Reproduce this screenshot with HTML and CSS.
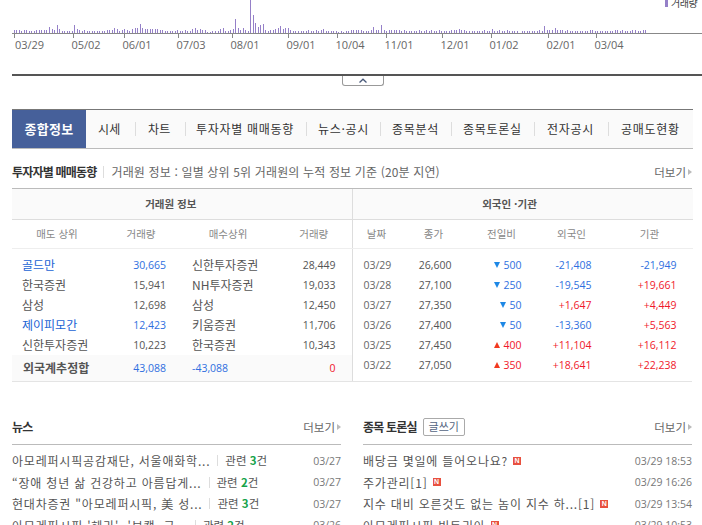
FILE: index.html
```html
<!DOCTYPE html>
<html lang="ko">

<head>
    <meta charset="UTF-8">
    <title>종합정보</title>
    <link rel="stylesheet" href="styles.css">
</head>

<body>
    <svg class="chart" width="702" height="52" viewBox="0 0 702 52">
        <path class="chart-bars" transform="translate(14.3 0) scale(2.515 1)" d="M-1 33m1-3v3m1-3v3m1-3v3m1-2v2m1-3v3m1-3v3m1-2v2m1-2v2m1-2v2m1-3v3
            m1-3v3m1-3v3m1-3v3m1-3v3m1-6v6m1-4v4m1-3v3m1-8v8m1-4v4m1-2v2
            m1-2v2m1-2v2m1-2v2m1-2v2m1-8v8m1-4v4m1-3v3m1-2v2m1-3v3m1-2v2
            m1-2v2m1-2v2m1-2v2m1-2v2m1-2v2m1-2v2m1-2v2m1-3v3m1-3v3m1-3v3
            m1-5v5m1-4v4m1-2v2m1-3v3m1-4v4m1-3v3m1-2v2m1-4v4m1-5v5m1-5v5
            m1-9v9m1-5v5m1-4v4m1-4v4m1-4v4m1-4v4m1-4v4m1-4v4m1-3v3m1-3v3
            m1-2v2m1-2v2m1-2v2m1-2v2m1-2v2m1-3v3m1-2v2m1-2v2m1-3v3m1-2v2
            m1-2v2m1-4v4m1-5v5m1-3v3m1-4v4m1-3v3m1-3v3m1-1v1m1-1v1m1-2v2
            m1-2v2m1-2v2m1-4v4m1-5v5m1-2v2m1-2v2m1-3v3m1-4v4m1-14v14m1-5v5
            m1-3v3m1-5v5m1-3v3m1-2v2m1-33v33m1-18v18m1-10v10m1-6v6m1-8v8m1-9v9
            m1-3v3m1-2v2m1-3v3m1-3v3m1-4v4m1-5v5m1-7v7m1-4v4m1-5v5m1-5v5
            m1-3v3m1-2v2m1-2v2m1-2v2m1-2v2m1-2v2m1-2v2m1-3v3m1-2v2m1-2v2
            m1-3v3m1-2v2m1-3v3m1-4v4m1-2v2m1-2v2m1-2v2m1-2v2m1-2v2m1-1v1
            m1-2v2m1-1v1m1-2v2m1-2v2m1-3v3m1-3v3m1-3v3m1-3v3m1-3v3m1-2v2
            m1-2v2m1-2v2m1-3v3m1-6v6m1-3v3m1-3v3m1-8v8m1-3v3m1-2v2m1-3v3
            m1-3v3m1-3v3m1-3v3m1-3v3m1-2v2m1-3v3m1-2v2m1-2v2m1-2v2m1-2v2
            m1-2v2m1-3v3m1-2v2m1-2v2m1-3v3m1-2v2m1-3v3m1-2v2m1-2v2m1-3v3
            m1-2v2m1-2v2m1-2v2m1-2v2m1-3v3m1-3v3m1-3v3m1-4v4m1-3v3m1-3v3
            m1-2v2m1-2v2m1-2v2m1-2v2m1-2v2m1-2v2m1-2v2m1-3v3m1-2v2m1-2v2
            m1-4v4m1-2v2m1-2v2m1-3v3m1-2v2m1-2v2m1-3v3m1-2v2m1-2v2m1-2v2
            m1-2v2m2-2v2m1-2v2m1-2v2m1-2v2m1-2v2m1-2v2m1-2v2m1-3v3
            m1-2v2m1-7v7m1-3v3m1-3v3m1-3v3m1-5v5m1-3v3m1-3v3m1-3v3m1-2v2
            m1-3v3m1-2v2m1-2v2m1-2v2m1-2v2m1-2v2m1-2v2m1-2v2m1-2v2m1-3v3
            m1-3v3m1-2v2m1-2v2m1-2v2m1-2v2m1-2v2m1-2v2m1-2v2m1-2v2m1-3v3
            m1-3v3m1-2v2m1-3v3m1-2v2m1-2v2m1-2v2m1-3v3m1-3v3m1-2v2m1-2v2
            m1-3v3m1-3v3" />
        <line class="chart-axis" x1="12" y1="33.5" x2="702" y2="33.5" />
        <path class="chart-ticks" d="M14.5 33v5M73.5 33v5M124.5 33v5M178.5 33v5M232.5 33v5M288.5 33v5M337.5 33v5M386.5 33v5M442.5 33v5M491.5 33v5M548.5 33v5M596.5 33v5" />
        <g class="chart-labels">
            <text x="29.5" y="49">03/29</text>
            <text x="86" y="49">05/02</text>
            <text x="137" y="49">06/01</text>
            <text x="191" y="49">07/03</text>
            <text x="245" y="49">08/01</text>
            <text x="301" y="49">09/01</text>
            <text x="350" y="49">10/04</text>
            <text x="399" y="49">11/01</text>
            <text x="455" y="49">12/01</text>
            <text x="504" y="49">01/02</text>
            <text x="561" y="49">02/01</text>
            <text x="609" y="49">03/04</text>
        </g>
        <rect class="chart-key" x="665" y="0" width="3" height="7" />
        <text class="chart-key-label" x="671" y="7">거래량</text>
    </svg>

    <div class="chart-fold">
        <button class="fold-btn" type="button">
            <svg width="8" height="5" viewBox="0 0 8 5">
                <path d="M.5 4.5 4 1.2l3.5 3.3" fill="none" stroke="#4a5a7a" stroke-width="1.3" />
            </svg>
        </button>
    </div>

    <div class="tabs">
        <a class="tab tab-active">종합정보</a>
        <a class="tab tab-sise">시세</a>
        <a class="tab tab-chart">차트</a>
        <a class="tab tab-investor">투자자별 매매동향</a>
        <a class="tab tab-news">뉴스·공시</a>
        <a class="tab tab-analysis">종목분석</a>
        <a class="tab tab-forum">종목토론실</a>
        <a class="tab tab-dart">전자공시</a>
        <a class="tab tab-short">공매도현황</a>
    </div>

    <div class="section-head trade-head">
        <strong class="section-title">투자자별 매매동향</strong>
        <span class="section-note">거래원 정보 : 일별 상위 5위 거래원의 누적 정보 기준 (20분 지연)</span>
        <a class="more">더보기</a>
    </div>

    <div class="trade">
        <table class="trade-table broker">
            <colgroup>
                <col class="b1">
                <col class="b2">
                <col class="b3">
                <col class="b4">
            </colgroup>
            <thead>
                <tr>
                    <th colspan="4" class="group group-broker">거래원 정보</th>
                </tr>
                <tr>
                    <th>매도 상위</th>
                    <th>거래량</th>
                    <th>매수상위</th>
                    <th>거래량</th>
                </tr>
            </thead>
            <tbody>
                <tr>
                    <td class="name link">골드만</td>
                    <td class="num up-blue">30,665</td>
                    <td class="name">신한투자증권</td>
                    <td class="num">28,449</td>
                </tr>
                <tr>
                    <td class="name">한국증권</td>
                    <td class="num">15,941</td>
                    <td class="name">NH투자증권</td>
                    <td class="num">19,033</td>
                </tr>
                <tr>
                    <td class="name">삼성</td>
                    <td class="num">12,698</td>
                    <td class="name">삼성</td>
                    <td class="num">12,450</td>
                </tr>
                <tr>
                    <td class="name link">제이피모간</td>
                    <td class="num up-blue">12,423</td>
                    <td class="name">키움증권</td>
                    <td class="num">11,706</td>
                </tr>
                <tr>
                    <td class="name">신한투자증권</td>
                    <td class="num">10,223</td>
                    <td class="name">한국증권</td>
                    <td class="num">10,343</td>
                </tr>
                <tr class="total">
                    <td class="name total-label">외국계추정합</td>
                    <td class="num up-blue">43,088</td>
                    <td class="name total-diff up-blue">-43,088</td>
                    <td class="num red">0</td>
                </tr>
            </tbody>
        </table>

        <table class="trade-table foreign">
            <colgroup>
                <col class="f1">
                <col class="f2">
                <col class="f3">
                <col class="f4">
                <col class="f5">
            </colgroup>
            <thead>
                <tr>
                    <th colspan="5" class="group group-foreign">외국인 ·기관</th>
                </tr>
                <tr>
                    <th>날짜</th>
                    <th>종가</th>
                    <th>전일비</th>
                    <th>외국인</th>
                    <th>기관</th>
                </tr>
            </thead>
            <tbody>
                <tr>
                    <td class="date">03/29</td>
                    <td class="num">26,600</td>
                    <td class="num up-blue"><i class="tri tri-down"></i>500</td>
                    <td class="num up-blue">-21,408</td>
                    <td class="num up-blue">-21,949</td>
                </tr>
                <tr>
                    <td class="date">03/28</td>
                    <td class="num">27,100</td>
                    <td class="num up-blue"><i class="tri tri-down"></i>250</td>
                    <td class="num up-blue">-19,545</td>
                    <td class="num red">+19,661</td>
                </tr>
                <tr>
                    <td class="date">03/27</td>
                    <td class="num">27,350</td>
                    <td class="num up-blue"><i class="tri tri-down"></i>50</td>
                    <td class="num red">+1,647</td>
                    <td class="num red">+4,449</td>
                </tr>
                <tr>
                    <td class="date">03/26</td>
                    <td class="num">27,400</td>
                    <td class="num up-blue"><i class="tri tri-down"></i>50</td>
                    <td class="num up-blue">-13,360</td>
                    <td class="num red">+5,563</td>
                </tr>
                <tr>
                    <td class="date">03/25</td>
                    <td class="num">27,450</td>
                    <td class="num red"><i class="tri tri-up"></i>400</td>
                    <td class="num red">+11,104</td>
                    <td class="num red">+16,112</td>
                </tr>
                <tr>
                    <td class="date">03/22</td>
                    <td class="num">27,050</td>
                    <td class="num red"><i class="tri tri-up"></i>350</td>
                    <td class="num red">+18,641</td>
                    <td class="num red">+22,238</td>
                </tr>
            </tbody>
        </table>
    </div>

    <div class="lower">
        <section class="board news">
            <div class="section-head board-head">
                <strong class="section-title">뉴스</strong>
                <a class="more">더보기</a>
            </div>
            <ul class="board-list">
                <li>
                    <span class="subject">아모레퍼시픽공감재단, 서울애화학...</span>
                    <span class="related">관련 <b>3</b>건</span>
                    <span class="when">03/27</span>
                </li>
                <li>
                    <span class="subject">“장애 청년 삶 건강하고 아름답게...</span>
                    <span class="related">관련 <b>2</b>건</span>
                    <span class="when">03/27</span>
                </li>
                <li>
                    <span class="subject">현대차증권 "아모레퍼시픽, 美 성...</span>
                    <span class="related">관련 <b>3</b>건</span>
                    <span class="when">03/27</span>
                </li>
                <li>
                    <span class="subject">아모레퍼시픽 '헤라', '보캠, 글...</span>
                    <span class="related">관련 <b>2</b>건</span>
                    <span class="when">03/26</span>
                </li>
            </ul>
        </section>

        <section class="board forum">
            <div class="section-head board-head">
                <strong class="section-title">종목 토론실</strong>
                <a class="write-btn">글쓰기</a>
                <a class="more">더보기</a>
            </div>
            <ul class="board-list">
                <li>
                    <span class="subject">배당금 몇일에 들어오나요?</span>
                    <i class="new-mark">N</i>
                    <span class="when">03/29 18:53</span>
                </li>
                <li>
                    <span class="subject">주가관리[1]</span>
                    <i class="new-mark">N</i>
                    <span class="when">03/29 16:26</span>
                </li>
                <li>
                    <span class="subject">지수 대비 오른것도 없는 놈이 지수 하...[1]</span>
                    <i class="new-mark">N</i>
                    <span class="when">03/29 13:54</span>
                </li>
                <li>
                    <span class="subject">아모레퍼시픽 빅토리아</span>
                    <i class="new-mark">N</i>
                    <span class="when">03/29 10:53</span>
                </li>
            </ul>
        </section>
    </div>
</body>

</html>
```

FILE: styles.css
```css
:root {
    --text-color: #555;
    --dark-text: #333;
    --muted-text: #888;
    --blue: #2f6fe0;
    --link-blue: #1a63d4;
    --red: #f0182c;
    --tab-blue: #46609a;
    --band: #fafafa;
    --line: #ddd;
    --strong-line: #bbb;
    --ko-font: "Noto Sans CJK KR", "Noto Sans", sans-serif;
    --num-font: "Open Sans", "Liberation Sans", sans-serif;
}

* {
    box-sizing: border-box;
    margin: 0;
    padding: 0;
}

html,
body {
    height: 525px;
    overflow: hidden;
}

body {
    width: 702px;
    padding-left: 12px;
    font-family: var(--ko-font);
    font-size: 12px;
    color: var(--text-color);
    background: #fff;
}

/* chart */
.chart {
    display: block;
    margin-left: -12px;
}

.chart-bars {
    fill: none;
    stroke: #9580c8;
    stroke-width: 1px;
    vector-effect: non-scaling-stroke;
    shape-rendering: crispEdges;
}

.chart-axis,
.chart-ticks {
    fill: none;
    stroke: #888;
    stroke-width: 1;
    shape-rendering: crispEdges;
}

.chart-labels text {
    font-family: var(--num-font);
    font-size: 11px;
    fill: #666;
    text-anchor: middle;
}

.chart-key {
    fill: #9580c8;
}

.chart-key-label {
    font-size: 10px;
    letter-spacing: -0.5px;
    fill: #444;
}

.chart-fold {
    display: flex;
    width: 690px;
    height: 35px;
    margin-top: 22px;
    padding-left: 330px;
    border-top: 2px solid #555;
}

.fold-btn {
    width: 42px;
    height: 10px;
    display: flex;
    justify-content: center;
    align-items: center;
    background: #fff;
    border: 1px solid #999;
    border-top: none;
    border-radius: 0 0 3px 3px;
}

/* tabs */
.tabs {
    display: flex;
    align-items: center;
    width: 681px;
    height: 40px;
    background: var(--band);
    border-top: 1px solid #777;
    border-bottom: 1px solid var(--strong-line);
}

.tab {
    display: block;
    font-size: 12px;
    color: var(--dark-text);
    letter-spacing: 0.7px;
    white-space: nowrap;
    border-right: 1px solid var(--line);
    line-height: 14px;
}

.tab-active {
    width: 74px;
    height: 38px;
    line-height: 38px;
    text-align: center;
    font-size: 13px;
    font-weight: 700;
    letter-spacing: 0.3px;
    color: #fff;
    background: var(--tab-blue);
    border-right: none;
}

.tab-sise { width: 50px; padding-left: 12px; letter-spacing: 0.3px; }
.tab-chart { width: 50px; padding-left: 12px; letter-spacing: 0.3px; }
.tab-investor { width: 121px; padding-left: 10px; }
.tab-news { width: 74px; padding-left: 11px; }
.tab-analysis { width: 71px; padding-left: 11px; }
.tab-forum { width: 83px; padding-left: 11px; }
.tab-dart { width: 74px; padding-left: 12px; }
.tab-short { padding-left: 12px; border-right: none; }

/* section heads */
.section-head {
    display: flex;
    align-items: center;
    width: 680px;
}

.trade-head {
    height: 39px;
    padding-top: 6px;
}

.section-title {
    font-size: 12px;
    font-weight: 700;
    color: var(--dark-text);
    letter-spacing: -0.8px;
}

.section-note {
    margin-left: 7px;
    padding-left: 7px;
    border-left: 1px solid var(--line);
    line-height: 12px;
    letter-spacing: 0.15px;
    color: #666;
}

.more {
    margin-left: auto;
    padding-right: 6px;
    font-size: 11.5px;
    color: #666;
    position: relative;
}

.more::after {
    content: "";
    position: absolute;
    right: 0;
    top: 50%;
    margin-top: -3px;
    border-left: 4px solid #bbb;
    border-top: 3px solid transparent;
    border-bottom: 3px solid transparent;
}

/* trade tables */
.trade {
    display: flex;
    width: 680px;
    border-top: 1px solid var(--strong-line);
    border-bottom: 1px solid #e4e4e4;
}

.trade-table {
    border-collapse: collapse;
    table-layout: fixed;
}

.broker {
    width: 340px;
    border-right: 1px solid var(--line);
}

.foreign {
    width: 340px;
}

.b1 { width: 90px; }
.b2 { width: 78px; }
.b3 { width: 96px; }
.b4 { width: 76px; }
.f1 { width: 48px; }
.f2 { width: 66px; }
.f3 { width: 70px; }
.f4 { width: 70px; }
.f5 { width: 86px; }

.trade-table th {
    height: 29px;
    font-size: 10.5px;
    font-weight: 400;
    color: #888;
    text-align: center;
    border-bottom: 1px solid #eee;
}

.trade-table .group {
    height: 30px;
    font-weight: 700;
    color: #555;
    background: var(--band);
    border-bottom: 1px solid var(--line);
}

.trade-table .group-broker {
    padding-right: 22px;
}

.trade-table .group-foreign {
    padding-right: 26px;
}

.trade-table td {
    height: 20px;
    line-height: 18px;
    white-space: nowrap;
}

.trade-table tbody tr:first-child td {
    height: 27px;
    padding-top: 7px;
}

.trade-table .name {
    padding-left: 10px;
}

.broker td:nth-child(3) {
    padding-left: 12px;
}

.trade-table .num {
    font-family: var(--num-font);
    font-size: 10.5px;
    text-align: right;
    padding-right: 15px;
}

.broker td:nth-child(2) {
    padding-right: 14px;
}

.broker td:nth-child(4) {
    padding-right: 16px;
}

.foreign td:nth-child(5) {
    padding-right: 16px;
}

.foreign tbody tr:last-child td {
    height: 26px;
    padding-bottom: 6px;
}

.trade-table .date {
    padding-left: 11px;
    font-family: var(--num-font);
    font-size: 10.5px;
    color: #666;
}

.trade-table .link {
    color: var(--link-blue);
}

.trade-table .up-blue {
    color: var(--blue);
}

.trade-table .red {
    color: var(--red);
}

.trade-table .total td {
    height: 26px;
    background: var(--band);
}

.trade-table .total-label {
    padding-left: 11px;
    font-weight: 700;
    color: #555;
}

.trade-table .total-diff {
    font-family: var(--num-font);
    font-size: 10.5px;
}

.tri {
    display: inline-block;
    width: 0;
    height: 0;
    margin-right: 3px;
    vertical-align: 1px;
    border-left: 3.5px solid transparent;
    border-right: 3.5px solid transparent;
}

.tri-down {
    border-top: 6px solid #1e88e5;
}

.tri-up {
    border-bottom: 6px solid #f2391f;
}

/* news and forum */
.lower {
    display: flex;
    gap: 22px;
    width: 680px;
    margin-top: 27px;
}

.board {
    flex: 1;
    min-width: 0;
}

.board-head {
    width: auto;
    height: 36px;
    border-bottom: 1px solid var(--strong-line);
}

.write-btn {
    width: 42px;
    height: 18px;
    margin-left: 6px;
    line-height: 15px;
    text-align: center;
    font-size: 11px;
    color: #54657f;
    border: 1px solid #aaa;
    border-radius: 2px;
}

.board-list {
    list-style: none;
    padding-top: 5px;
}

.board-list li {
    display: flex;
    align-items: center;
    height: 21.5px;
    white-space: nowrap;
}

.subject {
    color: var(--text-color);
    letter-spacing: 0.8px;
}

.related {
    margin-left: 7px;
    padding-left: 7px;
    border-left: 1px solid var(--line);
    line-height: 11px;
    font-size: 11.5px;
}

.related b {
    color: #16a34a;
}

.when {
    margin-left: auto;
    font-family: var(--num-font);
    font-size: 10.5px;
    color: #777;
}

.new-mark {
    width: 8px;
    height: 8px;
    margin-left: 5px;
    font-style: normal;
    font-family: "Liberation Sans", sans-serif;
    font-size: 7px;
    font-weight: 700;
    line-height: 8px;
    text-align: center;
    color: #fff;
    background: #e8503f;
}
```
